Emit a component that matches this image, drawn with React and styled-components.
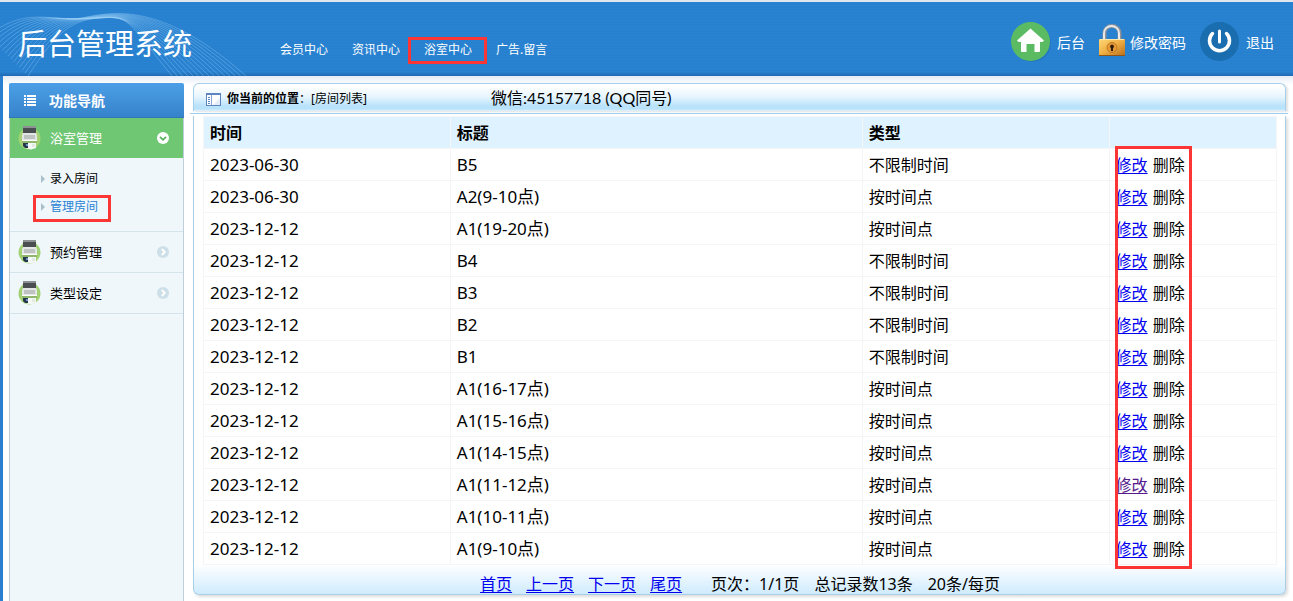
import React from "react";
import styled, { createGlobalStyle } from "styled-components";

const sans = `"Noto Sans", "Noto Sans CJK SC", sans-serif`;

const GlobalStyle = createGlobalStyle`
  *, *::before, *::after { box-sizing: border-box; }
  body { margin: 0; background: #fff; color: #000; font-family: ${sans}; font-size: 16px; }
  button { font: inherit; color: inherit; background: none; border: 0; padding: 0; cursor: pointer; }
  ul { list-style: none; margin: 0; padding: 0; }
`;

const Page = styled.div`
  min-height: 100vh;
  display: flex;
  flex-direction: column;
`;

const Header = styled.header`
  position: relative;
  display: flex;
  height: 76px;
  border-top: 2px solid #dfe6ec;
  color: #fff;
  background:
    linear-gradient(transparent 70px, rgba(20, 80, 150, 0.5) 74px),
    repeating-linear-gradient(#2a83d2 0 1px, #2781cf 1px 3px);
`;

const Waves = styled.svg`
  position: absolute;
  left: 0;
  top: 0;
  fill: none;
  stroke: #9fd0f5;
  stroke-opacity: 0.35;
`;

const Brand = styled.h1`
  position: relative;
  flex: none;
  width: 280px;
  margin: 0;
  padding: 20px 0 0 18px;
  font-size: 29px;
  font-weight: 400;
  line-height: 44px;
`;

const TopNav = styled.nav`
  display: flex;
  flex: 1;
  gap: 24px;
  padding-top: 38px;
  font-size: 12px;
  line-height: 20px;
`;

const redFrame = `
  content: "";
  position: absolute;
  border: 3px solid #fc3535;
  pointer-events: none;
`;

const TopLink = styled.a`
  position: relative;
  height: 20px;
  color: #fff;
  text-decoration: none;
  white-space: nowrap;
  &::after {
    ${(p) => (p.$marked ? redFrame : "")}
    inset: -3px -15px -4px -16px;
  }
`;

const Tools = styled.div`
  display: flex;
  gap: 14px;
  padding: 19px 19px 0 0;
  font-size: 14px;
`;

const Tool = styled.button`
  display: flex;
  align-items: center;
  gap: ${(p) => p.$gap}px;
  height: 41px;
  white-space: nowrap;
`;

const Body = styled.div`
  flex: 1;
  display: flex;
  gap: 9px;
  padding: 7px 7px 0 6px;
  border-left: 3px solid #2a80cf;
  background: linear-gradient(#e6edf6, #fff 9px);
`;

const Sidebar = styled.aside`
  flex: none;
  width: 175px;
  display: flex;
  flex-direction: column;
`;

const SideTitle = styled.h2`
  display: flex;
  align-items: center;
  gap: 13px;
  height: 35px;
  margin: 0;
  padding: 0 15px;
  border-bottom: 1px solid #2f77bd;
  border-radius: 2px 2px 0 0;
  background: linear-gradient(#4b9fe6, #3683cb);
  color: #fff;
  font-size: 14px;
`;

const Menu = styled.ul`
  flex: 1;
  border: solid #bccfdb;
  border-width: 0 1px;
  background: #eff7fb;
`;

const MenuButton = styled.button`
  display: flex;
  align-items: center;
  width: 100%;
  height: 40px;
  padding: 0 14px 0 8px;
  gap: 9px;
  font-size: 13px;
  text-align: left;
  color: ${(p) => (p.$open ? "#fff" : "#000")};
  background: ${(p) => (p.$open ? "#6fc773" : "transparent")};
`;

const MenuText = styled.span`
  flex: 1;
  padding-bottom: 2px;
`;

const MenuItem = styled.li`
  border-bottom: 1px solid #d3e5eb;
`;

const SubMenu = styled.ul`
  padding: 7px 0 10px 31px;
  font-size: 12px;
  line-height: 28px;
`;

const SubLink = styled.a`
  position: relative;
  display: inline-flex;
  align-items: center;
  height: 28px;
  gap: 5px;
  color: ${(p) => (p.$current ? "#2a82d4" : "#000")};
  text-decoration: none;
  &::before {
    content: "";
    border: solid transparent;
    border-width: 4px 0 4px 4px;
    border-left-color: #a9bfca;
  }
  &::after {
    ${(p) => (p.$current ? redFrame : "")}
    inset: 2px -13px -1px -8px;
  }
`;

const Main = styled.main`
  flex: 1;
  min-width: 0;
  padding-bottom: 6px;
`;

const Crumb = styled.div`
  display: flex;
  align-items: center;
  height: 28px;
  padding: 3px 12px 0;
  border: solid #a3cfea;
  border-width: 1px 1px 0;
  border-radius: 6px 6px 0 0;
  background: linear-gradient(#fff 2px, #e6f5fe 13px, #b9e2fb 22px, #b9e2fb 25px, #e3f3fd);
  box-shadow: 2px 1px 2px #e3e3e3;
  font-size: 12px;
  line-height: 20px;
`;

const CrumbPath = styled.div`
  width: 270px;
  padding-left: 6px;
`;

const Contact = styled.div`
  padding-bottom: 2px;
  font-family: Lato, "Noto Sans CJK SC", sans-serif;
  font-size: 16px;
`;

const Rule = styled.hr`
  height: 1px;
  margin: 2px -2px 2px -3px;
  border: 0;
  background: #9fcfee;
`;

const Panel = styled.section`
  padding: 0 8px 0 9px;
  border: 1px solid #a9cfe6;
  border-top: 0;
  border-radius: 0 0 6px 6px;
  background: linear-gradient(#fff, #fff) top / 100% calc(100% - 30px) no-repeat,
    linear-gradient(#fff, #cfebfe) bottom / 100% 30px no-repeat;
  box-shadow: 2px 2px 3px #dedede;
`;

const Table = styled.table`
  width: 100%;
  table-layout: fixed;
  border-collapse: collapse;
`;

const Cell = styled.td`
  height: 32px;
  padding: 0 6px;
  border: 1px solid #f5f5f5;
  font-size: ${(p) => p.$size || 16}px;
  line-height: 30px;
  text-align: left;
  white-space: nowrap;
`;

const HeadCell = styled(Cell)`
  position: relative;
  width: ${(p) => p.$width};
  background: #dff2ff;
`;

const ActionFrame = styled.div`
  &::after {
    ${redFrame}
    left: 5px;
    top: 29px;
    width: 77px;
    height: 423px;
  }
`;

const TextLink = styled.a`
  margin-right: ${(p) => (p.$spaced ? 1 : 0)}px;
  color: ${(p) => (p.$visited ? "#551a8b" : "#0000ee")};
  text-underline-offset: 2px;
`;

const Pager = styled.nav`
  display: flex;
  justify-content: center;
  gap: 14px;
  height: 29px;
  padding-top: 9px;
  line-height: 20px;
  white-space: nowrap;
`;

const Totals = styled.div`
  display: flex;
  gap: 15px;
  padding-left: 15px;
`;

const mix = (a, b, t) => Math.round((a + (b - a) * t) * 10) / 10;

function WaveLines() {
  const lines = [];
  for (let i = 0; i < 15; i++) {
    const t = i / 14;
    lines.push(
      <path
        key={i}
        d={`M${mix(-12, 28, t)} ${mix(36, 76, t)} C${mix(20, 55, t)} ${mix(10, 34, t)} ${mix(45, 70, t)} ${mix(18, 20, t)} ${mix(70, 100, t)} ${mix(19, 18, t)} S${mix(145, 125, t)} ${mix(-14, 18, t)} ${mix(246, 172, t)} 76`}
      />
    );
  }
  return (
    <Waves width="260" height="74" viewBox="0 2 260 74" aria-hidden="true">
      {lines}
    </Waves>
  );
}

const HomeIcon = () => (
  <svg width="40" height="41" viewBox="0 0 40 41">
    <circle cx="21" cy="22" r="19" fill="#1f6db5" opacity=".5" />
    <circle cx="19.500" cy="20.500" r="19.500" fill="#5abb62" />
    <path d="M19.500 7.500 33 19.500 31.500 21H29v9q0 1-1 1h-4.500v-8h-8v8H11q-1 0-1-1v-9H7.500L6 19.500Z" fill="#fff" />
  </svg>
);

const LockIcon = () => (
  <svg width="26" height="35" viewBox="0 0 26 35">
    <defs>
      <linearGradient id="brass" x1="0" y1="0" x2="1" y2="1">
        <stop offset="0" stopColor="#ffd978" />
        <stop offset=".5" stopColor="#eeae42" />
        <stop offset="1" stopColor="#b96b1b" />
      </linearGradient>
    </defs>
    <path d="M5.500 17V9.500C5.500-.5 20.500-.5 20.500 9.500V17" fill="none" stroke="#8e9297" strokeWidth="4" />
    <path d="M5 17V9.500C5-.5 20-.5 20 9.500V17" fill="none" stroke="#e6e8ea" strokeWidth="2" />
    <rect x="0" y="15" width="26" height="17" rx="1" fill="url(#brass)" />
    <path d="M0 31.500h26" stroke="#8f5316" />
    <path d="M1 15.500h24" stroke="#ffe9a8" />
    <circle cx="13" cy="23.500" r="5" fill="#e59a35" stroke="#c07a26" />
    <path d="M13 20.500a2 2 0 0 1 1 3.700V27h-2v-2.800a2 2 0 0 1 1-3.700" fill="#2d1c0c" />
  </svg>
);

const PowerIcon = () => (
  <svg width="39" height="41" viewBox="0 0 39 41">
    <circle cx="19.500" cy="20.500" r="19.500" fill="#1a6dae" />
    <path d="M12.500 12.500a10 10 0 1 0 14 0" fill="none" stroke="#fff" strokeWidth="3.500" strokeLinecap="round" />
    <path d="M19.500 10v11" stroke="#fff" strokeWidth="3" strokeLinecap="round" />
  </svg>
);

const ListIcon = () => (
  <svg width="12" height="11" viewBox="0 0 12 11" fill="#fff">
    <path d="M0 0h2v2H0zM3 0h9v2H3zM0 3h2v2H0zM3 3h9v2H3zM0 6h2v2H0zM3 6h9v2H3zM0 9h2v2H0zM3 9h9v2H3z" />
  </svg>
);

const PrinterIcon = () => (
  <svg width="23" height="24" viewBox="0 0 23 24">
    <circle cx="11.500" cy="12.500" r="11" fill="#a2d273" />
    <path d="M5 1h13v6H5z" fill="#4a4e50" />
    <path d="M5 0h13v2H5z" fill="#8c9294" />
    <path d="M5 7h13l1 2v6H4V9Z" fill="#e2e6e4" />
    <path d="M6 10h11M6 12h11" stroke="#9ba09e" />
    <path d="M4 14.500h15" stroke="#fff" />
    <path d="M4 16h15" stroke="#7f9a68" />
    <path d="M6 17h12v5l-5 1.500L7 22Z" fill="#f3f7f6" />
    <path d="M5 17h5v5H7l-2-2Z" fill="#26364b" />
    <path d="M8 18h2v2H8z" fill="#6b93c4" />
    <path d="M14 18h3v3h-3z" fill="#e2e9e0" />
  </svg>
);

const StateIcon = ({ open }) => (
  <svg width="12" height="12" viewBox="0 0 12 12">
    <circle cx="6" cy="6" r="6" fill={open ? "#fff" : "#cddfe8"} />
    <path
      d={open ? "M3 4.800 6 7.800 9 4.800" : "M4.800 3 7.800 6 4.800 9"}
      fill="none"
      stroke={open ? "#58b45e" : "#fff"}
      strokeWidth="1.800"
    />
  </svg>
);

const PanelIcon = () => (
  <svg width="15" height="13" viewBox="0 0 15 13">
    <rect x=".5" y=".5" width="14" height="12" fill="#fff" stroke="#5d85c2" />
    <path d="M0 1h15" stroke="#5d85c2" strokeWidth="2" />
    <path d="M5.500 2v10" stroke="#86a5d4" />
    <path d="M2 4.500h2M2 6.500h2M2 8.500h2M2 10.500h2" stroke="#5d85c2" />
    <path d="M7 12 14 5v7Z" fill="#e4ecf8" />
  </svg>
);

const rows = [
  ["2023-06-30", "B5", "不限制时间"],
  ["2023-06-30", "A2(9-10点)", "按时间点"],
  ["2023-12-12", "A1(19-20点)", "按时间点"],
  ["2023-12-12", "B4", "不限制时间"],
  ["2023-12-12", "B3", "不限制时间"],
  ["2023-12-12", "B2", "不限制时间"],
  ["2023-12-12", "B1", "不限制时间"],
  ["2023-12-12", "A1(16-17点)", "按时间点"],
  ["2023-12-12", "A1(15-16点)", "按时间点"],
  ["2023-12-12", "A1(14-15点)", "按时间点"],
  ["2023-12-12", "A1(11-12点)", "按时间点", true],
  ["2023-12-12", "A1(10-11点)", "按时间点"],
  ["2023-12-12", "A1(9-10点)", "按时间点"],
];

export default function App() {
  return (
    <Page lang="zh-CN">
      <GlobalStyle />
      <Header>
        <WaveLines />
        <Brand>后台管理系统</Brand>
        <TopNav>
          <TopLink href="#members">会员中心</TopLink>
          <TopLink href="#news">资讯中心</TopLink>
          <TopLink href="#baths" $marked>浴室中心</TopLink>
          <TopLink href="#messages">广告.留言</TopLink>
        </TopNav>
        <Tools>
          <Tool $gap={6}><HomeIcon />后台</Tool>
          <Tool $gap={5}><LockIcon />修改密码</Tool>
          <Tool $gap={7}><PowerIcon />退出</Tool>
        </Tools>
      </Header>
      <Body>
        <Sidebar>
          <SideTitle><ListIcon />功能导航</SideTitle>
          <Menu>
            <MenuItem>
              <MenuButton $open aria-expanded="true">
                <PrinterIcon /><MenuText>浴室管理</MenuText><StateIcon open />
              </MenuButton>
              <SubMenu>
                <li><SubLink href="#add">录入房间</SubLink></li>
                <li><SubLink href="#manage" $current>管理房间</SubLink></li>
              </SubMenu>
            </MenuItem>
            {["预约管理", "类型设定"].map((name) => (
              <MenuItem key={name}>
                <MenuButton aria-expanded="false">
                  <PrinterIcon /><MenuText>{name}</MenuText><StateIcon />
                </MenuButton>
              </MenuItem>
            ))}
          </Menu>
        </Sidebar>
        <Main>
          <Crumb>
            <PanelIcon />
            <CrumbPath><b>你当前的位置</b>：[房间列表]</CrumbPath>
            <Contact>微信:45157718 (QQ同号)</Contact>
          </Crumb>
          <Rule />
          <Panel>
            <Table>
              <thead>
                <tr>
                  <HeadCell as="th" $width="23%">时间</HeadCell>
                  <HeadCell as="th" $width="38.400%">标题</HeadCell>
                  <HeadCell as="th" $width="23%">类型</HeadCell>
                  <HeadCell as="th"><ActionFrame /></HeadCell>
                </tr>
              </thead>
              <tbody>
                {rows.map(([date, title, type, visited], i) => (
                  <tr key={i}>
                    <Cell $size={17}>{date}</Cell>
                    <Cell $size={17}>{title}</Cell>
                    <Cell>{type}</Cell>
                    <Cell>
                      <TextLink href="#edit" $visited={visited} $spaced>修改</TextLink> <button>删除</button>
                    </Cell>
                  </tr>
                ))}
              </tbody>
            </Table>
            <Pager>
              <TextLink href="#first">首页</TextLink>
              <TextLink href="#prev">上一页</TextLink>
              <TextLink href="#next">下一页</TextLink>
              <TextLink href="#last">尾页</TextLink>
              <Totals>
                <span>页次：1/1页</span>
                <span>总记录数13条</span>
                <span>20条/每页</span>
              </Totals>
            </Pager>
          </Panel>
        </Main>
      </Body>
    </Page>
  );
}
